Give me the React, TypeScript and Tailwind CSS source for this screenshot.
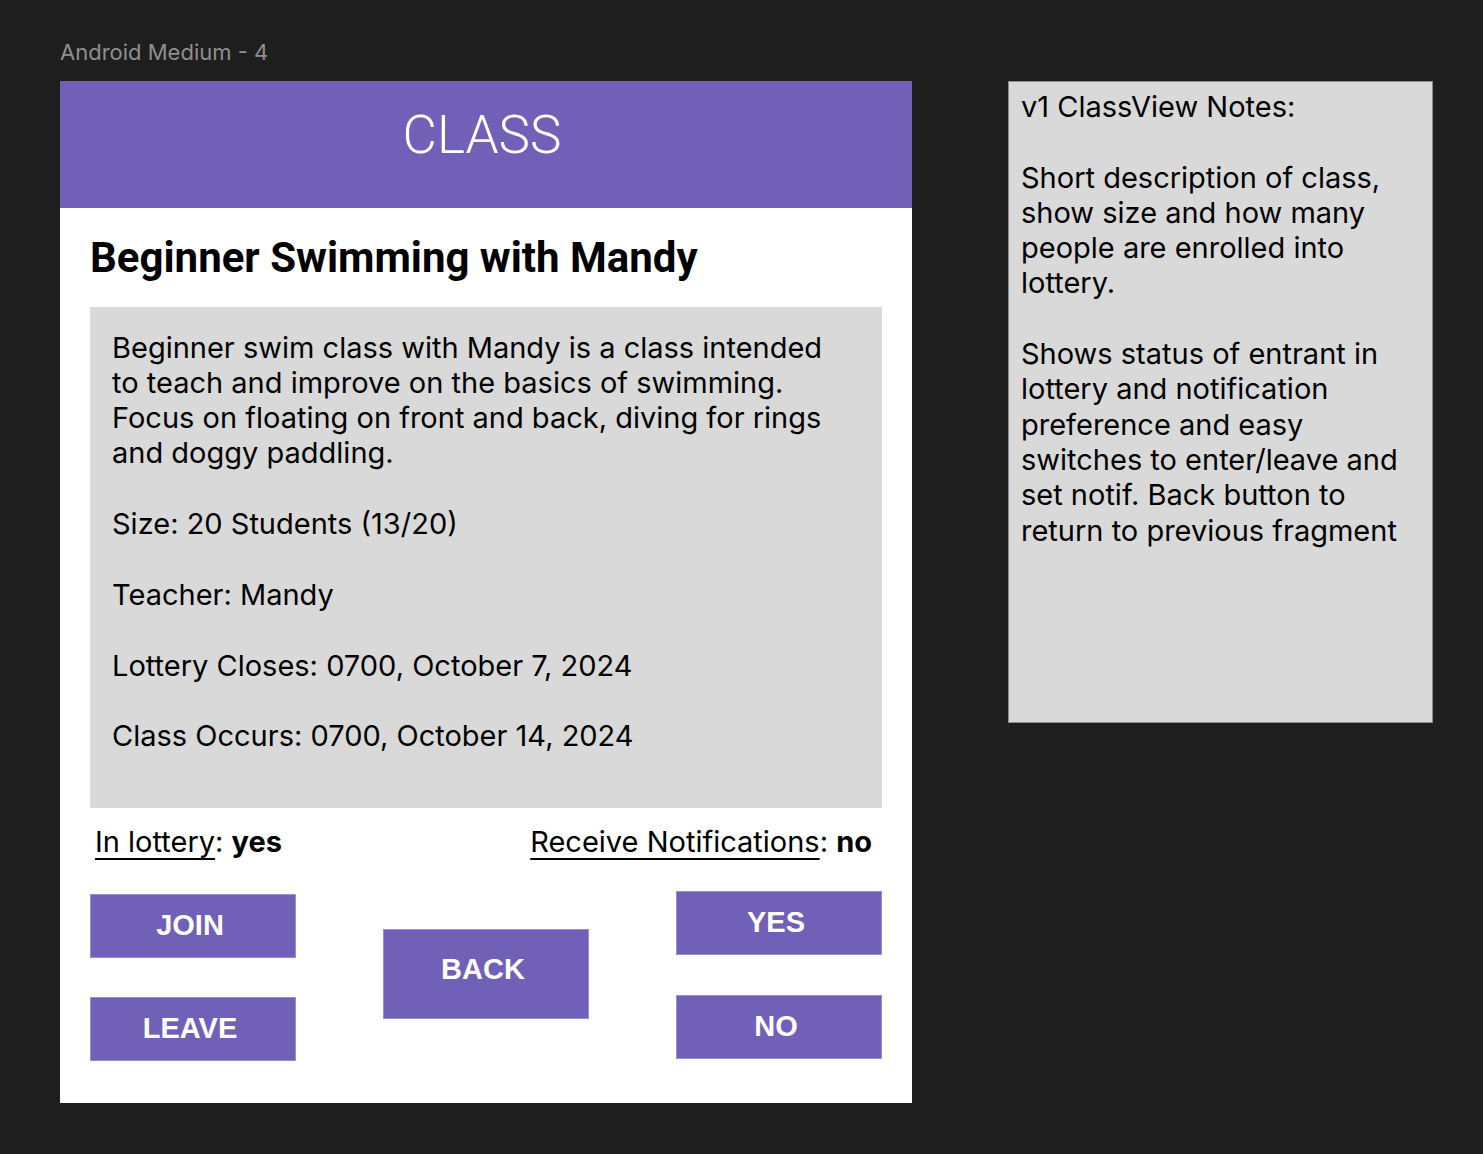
const purple = "bg-[#7160b7]";

function Btn({ label, tall }: { label: string; tall?: boolean }) {
  return (
    <div
      className={`${purple} w-[206px] ${tall ? "h-[90px] pb-[8px]" : "h-[64px]"} flex items-center justify-center border border-[#9a8cd6] text-white font-bold text-[29px]`}
      style={{ fontFamily: "'Liberation Sans', Arial, sans-serif" }}
    >
      <span className="-ml-[6px]">{label}</span>
    </div>
  );
}

const notes = [
  "v1 ClassView Notes:",
  "",
  "Short description of class,",
  "show size and how many",
  "people are enrolled into",
  "lottery.",
  "",
  "Shows status of entrant in",
  "lottery and notification",
  "preference and easy",
  "switches to enter/leave and",
  "set notif. Back button to",
  "return to previous fragment",
];

export default function App() {
  return (
    <div
      className="min-h-[1154px] w-full bg-[#1e1e1e] pl-[60px] pt-[39px]"
      style={{ fontFamily: "Inter, 'Noto Sans', sans-serif" }}
    >
      <div className="text-[22px] leading-[26px] text-[#8f8f8f] h-[42px]">Android Medium - 4</div>
      <div className="flex items-start gap-[96px]">
        {/* phone frame */}
        <div className="w-[852px] h-[1022px] bg-white flex flex-col">
          <div className={`${purple} h-[127px] flex justify-center pt-[28px]`}>
            <span
              className="-ml-[8px] text-white text-[53px] leading-[53px] font-light"
              style={{ fontFamily: "Roboto, sans-serif" }}
            >
              CLASS
            </span>
          </div>
          <div className="px-[30px]">
            <h1
              className="mt-[26px] text-[42px] leading-[48px] font-bold text-black"
              style={{ fontFamily: "Roboto, sans-serif" }}
            >
              Beginner Swimming with Mandy
            </h1>
            <div className="mt-[25px] h-[501px] bg-[#d9d9d9] px-[22px] pt-[23px] text-[29px] leading-[35px] text-black">
              <p>
                Beginner swim class with Mandy is a class intended
                <br />
                to teach and improve on the basics of swimming.
                <br />
                Focus on floating on front and back, diving for rings
                <br />
                and doggy paddling.
              </p>
              <p className="mt-[36px]">Size: 20 Students (13/20)</p>
              <p className="mt-[36px]">Teacher: Mandy</p>
              <p className="mt-[36px]">Lottery Closes: 0700, October 7, 2024</p>
              <p className="mt-[35px]">Class Occurs: 0700, October 14, 2024</p>
            </div>
            <div className="mt-[16px] pl-[5px] pr-[10px] flex justify-between text-[29px] leading-[35px] text-black">
              <span>
                <span className="underline underline-offset-[6px] decoration-[2px]">In lottery</span>: <b>yes</b>
              </span>
              <span>
                <span className="underline underline-offset-[6px] decoration-[2px]">Receive Notifications</span>: <b>no</b>
              </span>
            </div>
            <div className="mt-[32px] flex justify-between items-start">
              <div className="mt-[3px] flex flex-col gap-[39px]">
                <Btn label="JOIN" />
                <Btn label="LEAVE" />
              </div>
              <div className="mt-[38px]">
                <Btn label="BACK" tall />
              </div>
              <div className="flex flex-col gap-[40px]">
                <Btn label="YES" />
                <Btn label="NO" />
              </div>
            </div>
          </div>
        </div>
        {/* notes */}
        <div className="w-[425px] h-[642px] bg-[#d9d9d9] border border-[#8a8a8a] px-[12px] pt-[7px] text-[29px] leading-[35.3px] text-black">
          {notes.map((l, i) => (
            <div key={i} className={l === "" ? "h-[35.3px]" : ""}>
              {l}
            </div>
          ))}
        </div>
      </div>
    </div>
  );
}
